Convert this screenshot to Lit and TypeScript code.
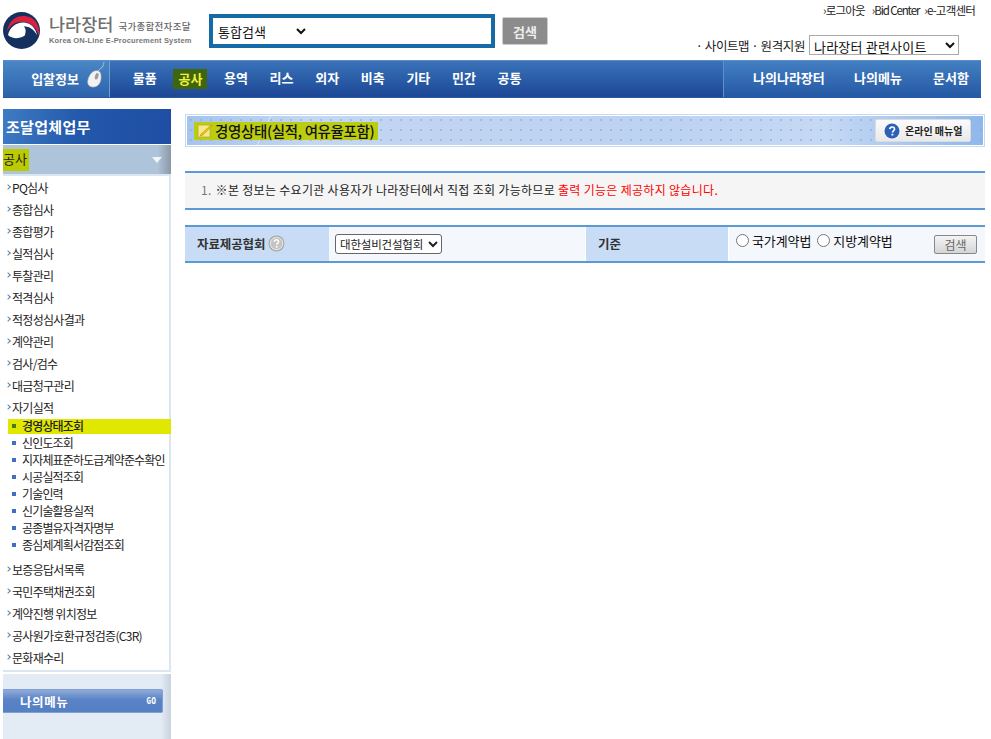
import { LitElement, html, css } from "lit";
import { customElement } from "lit/decorators.js";

const NAV = ["물품", "공사", "용역", "리스", "외자", "비축", "기타", "민간", "공통"];
const MENU_A = ["PQ심사", "종합심사", "종합평가", "실적심사", "투찰관리", "적격심사", "적정성심사결과", "계약관리", "검사/검수", "대금청구관리", "자기실적"];
const SUB = ["경영상태조회", "신인도조회", "지자체표준하도급계약준수확인", "시공실적조회", "기술인력", "신기술활용실적", "공종별유자격자명부", "종심제계획서감점조회"];
const MENU_B = ["보증응답서목록", "국민주택채권조회", "계약진행 위치정보", "공사원가호환규정검증(C3R)", "문화재수리"];

@customElement("app-root")
export class AppRoot extends LitElement {
  static styles = css`
    :host { display: block; width: 991px; height: 739px; overflow: hidden; background: #fff; color: #222;
      font-family: "Noto Sans CJK KR", "Noto Sans", sans-serif; font-size: 12px; }
    * { box-sizing: border-box; }
    .header { display: flex; height: 60px; }
    .logo { display: flex; width: 209px; padding: 12px 0 0 3px; gap: 9px; flex: none; }
    .logo-text { display: flex; flex-direction: column; color: #666; padding-top: 2px; }
    .logo-top { display: flex; align-items: center; gap: 5px; height: 20px; }
    .logo-name { font-size: 17.500px; font-weight: 500; color: #707070; letter-spacing: 0; line-height: 20px; white-space: nowrap; }
    .logo-sub { font-size: 9.500px; color: #666; font-weight: 500; letter-spacing: 0.3px; margin-top: 4px; white-space: nowrap; }
    .logo-en { font-family: "Liberation Sans", sans-serif; font-size: 7.500px; font-weight: 700; color: #777; letter-spacing: 0.16px; line-height: 10px; margin-top: 2px; white-space: nowrap; }
    .search { display: flex; align-items: flex-start; padding-top: 14px; gap: 7px; flex: none; }
    .search-box { width: 286px; height: 34px; border: 4px solid #166ba6; padding-left: 1px; display: flex; align-items: center; }
    .search-box select { width: 95px; height: 24px; border: 0; background: #fff; font: 400 13px "Noto Sans CJK KR", sans-serif; color: #111; outline: none; }
    .search-btn { margin-top: 3px; width: 46px; height: 28px; background: #8c8c8c; border: 1px solid #ccc; border-radius: 2px; color: #eee; font-size: 13px; font-weight: 700; display: flex; align-items: center; justify-content: center; }
    .util { margin-left: auto; width: 300px; padding-right: 16px; display: flex; flex-direction: column; align-items: flex-end; padding-top: 2px; }
    .links { display: flex; gap: 7px; font-size: 11.500px; letter-spacing: -0.8px; line-height: 17px; color: #222; }
    .links .en { letter-spacing: -1.100px; margin-right: -2px; }
    .sites { display: flex; align-items: center; gap: 4px; margin-top: 16px; margin-right: 16px; font-size: 12.500px; letter-spacing: -0.4px; height: 20px; white-space: nowrap; }
    .sites select { width: 150px; height: 20px; border: 1px solid #aaa; background: #fff; font: 400 13px "Noto Sans CJK KR", sans-serif; color: #111; padding: 0; letter-spacing: 0.2px; }

    .nav { display: flex; margin-left: 3px; width: 978px; height: 38px; color: #fff; font-weight: 700; font-size: 13px;
      background: linear-gradient(#3b72b8, #2d62ab 40%, #1d4694); border-top: 1px solid #5a8fc9; border-bottom: 1px solid #2a5aa5; }
    .nav-first { width: 107px; flex: none; display: flex; align-items: center; justify-content: flex-end; gap: 8px; padding-right: 4px; margin-right: 12px; line-height: 34px;
      background: linear-gradient(#4a86c6, #2d62ab); border-right: 1px solid #6e9ed2; }
    .nav-first svg { margin-top: -8px; }
    .nav-item { width: 45.600px; flex: none; text-align: center; }
    .nav-item, .nav-right span { line-height: 34px; }
    .mark-dark { display: inline-block; background: #3f660f; color: #f0f23a; width: 34px; height: 20px; line-height: 20px; vertical-align: middle; margin-top: -1px; }
    .nav-right { margin-left: auto; width: 258px; display: flex; background: linear-gradient(#437fc2, #2558a4); border-left: 1px solid #5e90c9; padding-left: 29px; white-space: nowrap; }
    .nav-right span:nth-child(1) { width: 101px; }
    .nav-right span:nth-child(2) { width: 79px; }

    .main { display: flex; margin-top: 11px; }
    .side { width: 168px; margin-left: 3px; flex: none; height: 630px; display: flex; flex-direction: column; }
    .side-title { height: 35px; background: linear-gradient(100deg, #3f7cc4, #2358ab 45%, #1e4ea3); color: #fff; font-size: 15px; font-weight: 700; line-height: 35px; padding-left: 3px; letter-spacing: 0.3px; }
    .side-sec { margin-top: 1px; height: 29px; background: linear-gradient(90deg, #aec4da 92%, #8d98a6); display: flex; align-items: center; justify-content: space-between; padding-right: 9px; font-size: 13px; }
    .mark-sec { background: #bccb00; height: 22px; line-height: 20px; width: 26px; color: #222; }
    .tri { width: 0; height: 0; border: 5px solid transparent; border-top: 6px solid #f1f5f9; border-bottom: 0; }
    .side-list { height: 498px; border-top: 2px solid #dbe6f0; border-right: 2px solid #dbe6f0; border-bottom: 2px solid #dbe6f0; }
    .mi { display: flex; align-items: center; height: 22px; padding-left: 3px; font-size: 12px; letter-spacing: -0.7px; white-space: nowrap; color: #222; }
    .mi i { width: 4px; height: 4px; margin-right: 2px; flex: none; border-top: 1px solid #5b87ad; border-right: 1px solid #5b87ad; transform: rotate(45deg); }
    .si { display: flex; align-items: center; height: 17px; padding-left: 9px; font-size: 12px; letter-spacing: -0.85px; white-space: nowrap; color: #222; }
    .si i { width: 4px; height: 4px; background: #3f6fc0; margin-right: 6px; flex: none; }
    .si.on { background: linear-gradient(#e0e800, #e0e800) 5px 2px / 163px 15px no-repeat; font-weight: 500; margin-right: -2px; }
    .si.on i { background: #4a7a10; }
    .subs { padding-bottom: 5px; margin-top: -1px; }
    .my { flex: 1; margin-top: 2px; background: linear-gradient(90deg, #e3ebf5 94%, #c9d3dd); padding-top: 15px; }
    .my-btn { width: 160px; height: 24px; background: linear-gradient(#8fabd9, #5a82c6 45%, #5580c4); border: 1px solid #7f9fd2; border-left: 0; border-radius: 0 2px 2px 0; color: #fff; display: flex; align-items: center; justify-content: space-between; padding: 0 6px 0 17px; font-size: 12.500px; font-weight: 700; letter-spacing: 0.6px; }
    .my-btn small { font: 700 8px "DejaVu Sans Mono", monospace; letter-spacing: 0; }

    .content { margin-left: 14px; width: 800px; padding-top: 5px; flex: none; }
    .title { height: 33px; border: 1px solid #c6daf3; box-shadow: inset 0 0 0 1px #fff; display: flex; align-items: center; justify-content: space-between; padding: 0 13px 0 8px;
      background:
        linear-gradient(146deg, transparent 49.700%, rgba(255,255,255,.7) 50%, transparent 50.300%) 698px 0 / 60px 100% no-repeat,
        linear-gradient(105deg, transparent 49%, rgba(255,255,255,.6) 50%, transparent 51%) 792px 0 / 20px 100% no-repeat,
        linear-gradient(115deg, transparent 48%, rgba(255,255,255,.6) 50%, transparent 52%) 66px 0 / 24px 100% no-repeat,
        radial-gradient(circle, rgba(130,170,225,.55) .8px, transparent 1.100px) 0 0 / 10px 10px,
        linear-gradient(90deg, #a5c3ec, #c3d6f2 15%, #bcd2f1 60%, #c5d9f4 80%, #8fb7ea); }
    .title-left { display: flex; align-items: center; height: 18px; background: #bccd10; gap: 2px; padding: 0 4px 0 3px; font-size: 14.500px; font-weight: 500; letter-spacing: -0.35px; color: #111; white-space: nowrap; }
    .manual { width: 96px; height: 23px; background: linear-gradient(#fbfbfb, #e9e9e9); border: 1px solid #dcdcdc; border-radius: 2px; display: flex; align-items: center; gap: 5px; padding-left: 8px; font-size: 10px; font-weight: 700; white-space: nowrap; }
    .notice { margin-top: 24px; height: 39px; background: #f5f5f5; border-top: 2px solid #5b9bd5; border-bottom: 2px solid #5b9bd5; padding-left: 16px; display: flex; align-items: center; font-size: 12px; letter-spacing: 0.3px; white-space: nowrap; padding-bottom: 2px; }
    .num { color: #777; margin-right: 4px; }
    .red { color: #f00; }
    .form { margin-top: 15px; height: 38px; border-top: 2px solid #5b9bd5; border-bottom: 2px solid #5b9bd5; display: grid; grid-template-columns: 144px 256px 144px 1fr; background: #f4f7fc; }
    .lab { background: #c9dcf5; display: flex; align-items: center; font-weight: 700; font-size: 12.500px; color: #333; letter-spacing: -0.1px; padding-bottom: 2px; }
    .lab.a { padding-left: 12px; gap: 3px; }
    .lab.b { padding-left: 12px; border-left: 1px solid #fff; border-right: 1px solid #fff; }
    .val { display: flex; align-items: center; padding-left: 6px; }
    .val select { width: 107px; height: 20px; font: 400 11.500px "Noto Sans CJK KR", sans-serif; letter-spacing: -0.2px; color: #222; background: #fff; border: 1px solid #666; border-radius: 3px; padding: 0; }
    .std { display: flex; align-items: flex-start; padding: 3px 8px 0 7px; font-size: 13px; letter-spacing: -0.1px; color: #111; white-space: nowrap; }
    .std label { display: flex; align-items: center; height: 20px; margin-right: 6px; }
    .std input { margin: 0 3px 0 0; width: 13px; height: 13px; }
    .go { margin-left: auto; margin-top: 5px; width: 43px; height: 19px; background: linear-gradient(#f4f4f4, #d5d5d5); border: 1px solid #888; border-radius: 2px; display: flex; align-items: center; justify-content: center; font-size: 12px; color: #666; }
  `;

  render() {
    return html`
      <div class="header">
        <div class="logo">
          <svg width="37" height="37" viewBox="0 0 37 37" aria-hidden="true">
            <circle cx="18.500" cy="18.500" r="18.500" fill="#14305f"/>
            <path d="M4 20C5 10 12 4 20 4c6 0 10 2 13 6 3 4 4 9 3 14-2-7-7-13-15-14C13 9 7 13 4 20Z" fill="#d8213f"/>
            <path d="M5 23C7 15 13 10 21 10.500c7 .5 12 6 13 13-3-6-8-9-13-9 4 2 4 7 0 9.500-5 3-12 3-16-1Z" fill="#fff"/>
            <path d="M21 14.500c5 0 10 3 13 9-1 4-4 6-7 5-3-1-3-4-5-6 1-3 1-6-1-8Z" fill="#14305f"/>
          </svg>
          <div class="logo-text">
            <div class="logo-top"><span class="logo-name">나라장터</span><span class="logo-sub">국가종합전자조달</span></div>
            <div class="logo-en">Korea ON-Line E-Procurement System</div>
          </div>
        </div>
        <div class="search">
          <div class="search-box"><select><option>통합검색</option></select></div>
          <div class="search-btn">검색</div>
        </div>
        <div class="util">
          <div class="links"><span>›로그아웃</span><span class="en">›Bid Center</span><span>›e-고객센터</span></div>
          <div class="sites"><span>· 사이트맵 · 원격지원</span><select><option>나라장터 관련사이트</option></select></div>
        </div>
      </div>

      <div class="nav">
        <div class="nav-first">입찰정보
          <svg width="18" height="26" viewBox="0 0 18 26" aria-hidden="true">
            <path d="M11 10c0-3 4-3 5-6 .5-1 .5-2 1-4" fill="none" stroke="#a9c4e0" stroke-width="1"/>
            <path d="M8 9c4-1 6 1 6 6 0 6-3 10-8 10-4 0-6-3-5-7 1-4 3-8 7-9Z" fill="#f2f2f2" stroke="#c9c9c9" stroke-width=".6"/>
            <path d="M10 11c1.500 0 2 1 1.500 3s-1 3.500-2.500 3.500-1.500-2-1-3.500S9 11 10 11Z" fill="#9c9c9c"/>
          </svg>
        </div>
        ${NAV.map((n) => html`<div class="nav-item">${n === "공사" ? html`<span class="mark-dark">${n}</span>` : n}</div>`)}
        <div class="nav-right"><span>나의나라장터</span><span>나의메뉴</span><span>문서함</span></div>
      </div>

      <div class="main">
        <div class="side">
          <div class="side-title">조달업체업무</div>
          <div class="side-sec"><span class="mark-sec">공사</span><span class="tri"></span></div>
          <div class="side-list">
            ${MENU_A.map((m) => html`<div class="mi"><i></i>${m}</div>`)}
            <div class="subs">
              ${SUB.map((s, i) => html`<div class="si ${i === 0 ? "on" : ""}"><i></i>${s}</div>`)}
            </div>
            ${MENU_B.map((m) => html`<div class="mi"><i></i>${m}</div>`)}
          </div>
          <div class="my"><div class="my-btn"><span>나의메뉴</span><small>GO</small></div></div>
        </div>

        <div class="content">
          <div class="title">
            <div class="title-left">
              <svg width="16" height="15" viewBox="0 0 16 15" aria-hidden="true">
                <rect x="1" y="2" width="12" height="12" fill="#f6e98a" stroke="#b8a83a" stroke-width=".8"/>
                <path d="M4 11 14 2l1 1-9 9-3 1Z" fill="#f0c419" stroke="#a88a10" stroke-width=".5"/>
              </svg>
              경영상태(실적, 여유율포함)
            </div>
            <div class="manual">
              <svg width="16" height="16" viewBox="0 0 16 16" aria-hidden="true">
                <circle cx="8" cy="8" r="7.500" fill="#2b62b8"/>
                <path d="M5.700 6.200C5.900 4.800 6.900 4 8.200 4c1.400 0 2.300.9 2.300 2 0 1.800-2.100 1.800-2.100 3.600" fill="none" stroke="#fff" stroke-width="1.600"/>
                <rect x="7.500" y="10.700" width="1.800" height="1.800" fill="#fff"/>
              </svg>
              온라인 매뉴얼
            </div>
          </div>

          <div class="notice"><span class="num">1.</span>※본 정보는 수요기관 사용자가 나라장터에서 직접 조회 가능하므로&nbsp;<span class="red">출력 기능은 제공하지 않습니다.</span></div>

          <div class="form">
            <div class="lab a">자료제공협회
              <svg width="17" height="17" viewBox="0 0 17 17" aria-hidden="true">
                <circle cx="8.500" cy="8.500" r="8" fill="#a8a8a8"/>
                <circle cx="8.500" cy="8.500" r="6.300" fill="#c4c4c4" stroke="#ececec"/>
                <path d="M6.300 6.800C6.400 5.500 7.300 4.800 8.500 4.800c1.300 0 2.100.8 2.100 1.800 0 1.600-1.900 1.600-1.900 3.200" fill="none" stroke="#fff" stroke-width="1.500"/>
                <rect x="7.800" y="10.900" width="1.700" height="1.700" fill="#fff"/>
              </svg>
            </div>
            <div class="val"><select><option>대한설비건설협회</option></select></div>
            <div class="lab b">기준</div>
            <div class="std">
              <label><input type="radio" name="k" />국가계약법</label>
              <label><input type="radio" name="k" />지방계약법</label>
              <div class="go">검색</div>
            </div>
          </div>
        </div>
      </div>
    `;
  }
}
